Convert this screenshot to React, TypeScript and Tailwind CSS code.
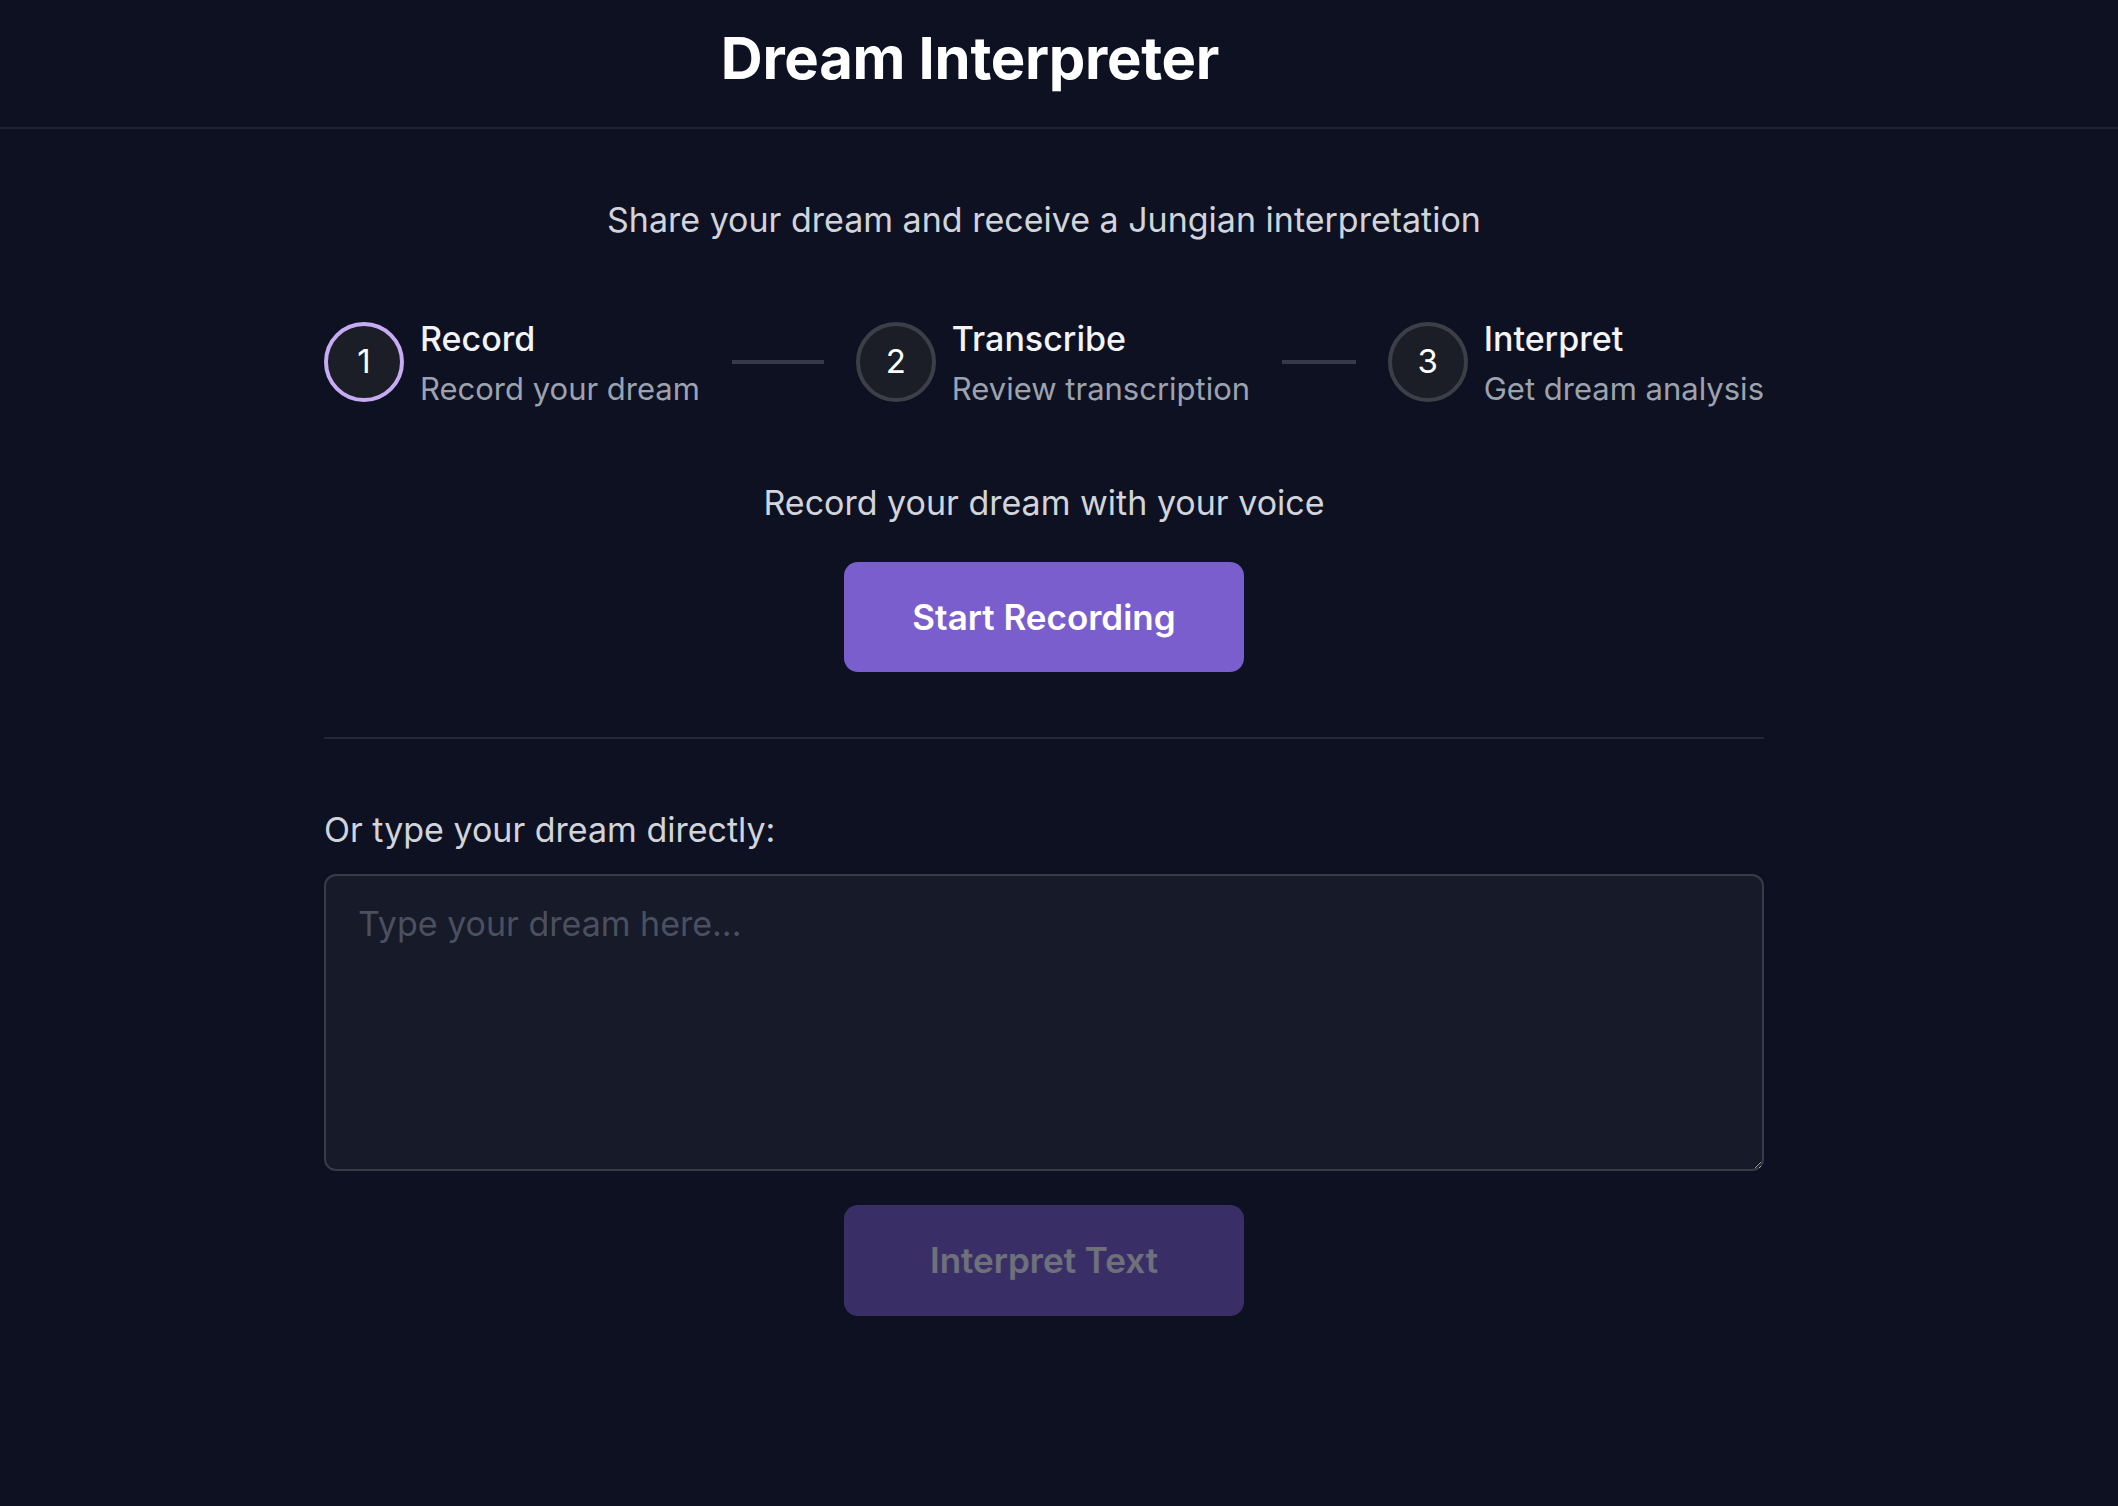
import { useState } from "react";

const STEPS = [
  { n: 1, title: "Record", sub: "Record your dream" },
  { n: 2, title: "Transcribe", sub: "Review transcription" },
  { n: 3, title: "Interpret", sub: "Get dream analysis" },
];

export default function App() {
  const [text, setText] = useState("");
  const active = 1;

  return (
    <div
      className="min-h-[1506px] bg-[#0e1122] text-white"
      style={{ fontFamily: "Inter, 'Noto Sans', sans-serif" }}
    >
      {/* Header */}
      <header className="border-b-2 border-[#1f2232] pt-[22px] pb-[33px]">
        <div className="flex justify-center pr-[178px]">
          <h1 className="text-[58px] leading-[72px] font-bold tracking-[-0.3px] text-white">
            Dream Interpreter
          </h1>
        </div>
      </header>

      <main className="pr-[30px] pt-[63px]">
        <div className="mx-auto w-[1440px]">
          <p className="text-center text-[34px] leading-[56px] text-[#d1d5db]">
            Share your dream and receive a Jungian interpretation
          </p>

          {/* Steps */}
          <div className="mt-[64px] flex items-center">
            {STEPS.map((s, i) => {
              const last = i === STEPS.length - 1;
              return (
                <div key={s.n} className={`flex items-center ${last ? "" : "flex-1"}`}>
                  <div
                    className={`flex h-[80px] w-[80px] shrink-0 items-center justify-center rounded-full border-[4px] bg-[#1b1d27] text-[33px] ${
                      s.n === active ? "border-[#c7abf3]" : "border-[#3d3f48]"
                    }`}
                  >
                    {s.n}
                  </div>
                  <div className="ml-[16px] shrink-0">
                    <div className="text-[34px] leading-[54px] font-medium text-[#f3f4f6]">{s.title}</div>
                    <div className="text-[31px] leading-[46px] text-[#9ca3af]">{s.sub}</div>
                  </div>
                  {!last && <div className="mx-[32px] h-[4px] flex-1 bg-[#363947]" />}
                </div>
              );
            })}
          </div>

          {/* Record */}
          <div className="mt-[63px] flex flex-col items-center">
            <p className="text-[34px] leading-[56px] text-[#d1d5db]">Record your dream with your voice</p>
            <button className="mt-[31px] flex h-[110px] w-[400px] items-center justify-center rounded-[14px] bg-[#7b5ecd] text-[35px] font-semibold text-white">
              Start Recording
            </button>
          </div>

          <div className="mt-[65px] h-[2px] bg-[#242736]" />

          {/* Text input */}
          <div className="pt-[63px]">
            <label className="block text-[34px] leading-[56px] text-[#d1d5db]">Or type your dream directly:</label>
            <textarea
              value={text}
              onChange={(e) => setText(e.target.value)}
              placeholder="Type your dream here..."
              className="mt-[16px] block h-[297px] w-full rounded-[12px] border-2 border-[#393c48] bg-[#171a28] px-[32px] pt-[20px] text-[34px] leading-[56px] text-white outline-none placeholder:text-[#4b5060]"
            />
            <div className="mt-[34px] flex justify-center">
              <button
                disabled
                className="flex h-[111px] w-[400px] items-center justify-center rounded-[14px] bg-[#7b5ecd] text-[35px] font-semibold text-white opacity-40"
              >
                Interpret Text
              </button>
            </div>
          </div>
        </div>
      </main>
    </div>
  );
}
